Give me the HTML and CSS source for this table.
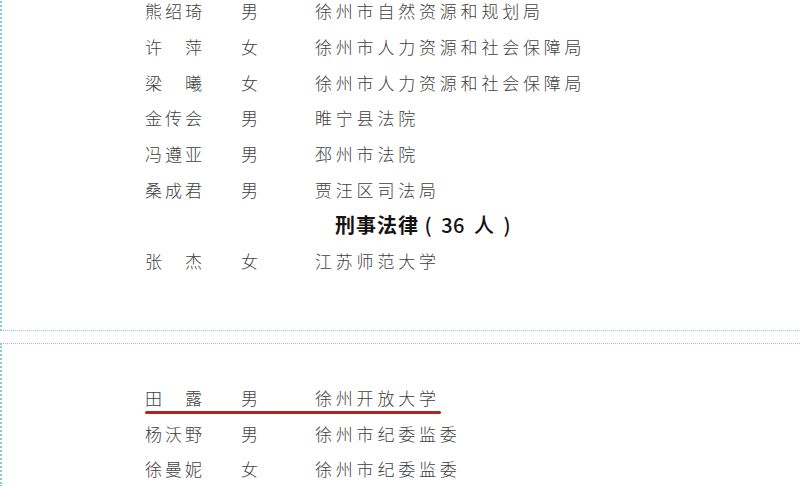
FILE: index.html
```html
<!DOCTYPE html>
<html lang="zh-CN">
<head>
<meta charset="utf-8">
<title>名单</title>
<link rel="stylesheet" href="styles.css">
</head>
<body>
  <div class="page page-top">
    <div class="row"><span class="name">熊绍琦</span><span class="sex">男</span><span class="org">徐州市自然资源和规划局</span></div>
    <div class="row"><span class="name">许　萍</span><span class="sex">女</span><span class="org">徐州市人力资源和社会保障局</span></div>
    <div class="row"><span class="name">梁　曦</span><span class="sex">女</span><span class="org">徐州市人力资源和社会保障局</span></div>
    <div class="row"><span class="name">金传会</span><span class="sex">男</span><span class="org">睢宁县法院</span></div>
    <div class="row"><span class="name">冯遵亚</span><span class="sex">男</span><span class="org">邳州市法院</span></div>
    <div class="row"><span class="name">桑成君</span><span class="sex">男</span><span class="org">贾汪区司法局</span></div>
    <div class="row heading"><span class="title">刑事法律 <span class="count">( 36 人 )</span></span></div>
    <div class="row"><span class="name">张　杰</span><span class="sex">女</span><span class="org">江苏师范大学</span></div>
  </div>
  <div class="page page-bottom">
    <div class="row marked"><span class="name">田　露</span><span class="sex">男</span><span class="org">徐州开放大学</span></div>
    <div class="row"><span class="name">杨沃野</span><span class="sex">男</span><span class="org">徐州市纪委监委</span></div>
    <div class="row"><span class="name">徐曼妮</span><span class="sex">女</span><span class="org">徐州市纪委监委</span></div>
  </div>
</body>
</html>
```

FILE: styles.css
```css
html, body {
  margin: 0;
  padding: 0;
  background: #ffffff;
  overflow: hidden;
}

body {
  width: 800px;
  height: 486px;
  font-family: "Noto Sans CJK SC", "Noto Sans", sans-serif;
  color: #404040;
}

.page {
  border-left: 2px dotted #86cadb;
  padding-left: 143px;
}

.page-top {
  margin-top: -7px;
  padding-bottom: 51px;
  border-bottom: 1px dotted #86cadb;
}

.page-bottom {
  margin-top: 12px;
  padding-top: 36px;
  border-top: 1px dotted #86cadb;
}

.row {
  position: relative;
  display: grid;
  grid-template-columns: 96px 74px auto;
  align-items: center;
  height: 35.7px;
  font-size: 17px;
  font-weight: 300;
  line-height: 1;
}

.name {
  letter-spacing: 3px;
  white-space: pre;
}

.org {
  letter-spacing: 3.8px;
  white-space: nowrap;
}

.heading {
  display: block;
  padding-left: 190px;
  line-height: 35.7px;
}

.title {
  font-size: 20px;
  font-weight: 700;
  letter-spacing: 1px;
  color: #141414;
}

.count {
  letter-spacing: 0.5px;
  word-spacing: 4px;
  font-weight: 500;
}

.marked::after {
  content: "";
  position: absolute;
  left: 0;
  bottom: 1px;
  width: 296px;
  height: 3px;
  border-radius: 2px;
  background: #b3231d;
}
```
